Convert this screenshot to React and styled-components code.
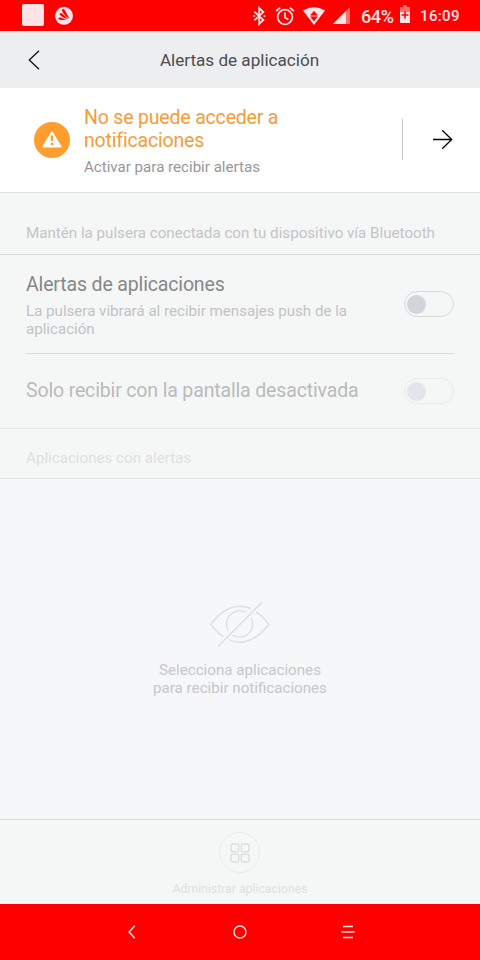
import React from "react";
import styled, { createGlobalStyle } from "styled-components";

const GlobalStyle = createGlobalStyle`
  * {
    box-sizing: border-box;
  }

  body {
    margin: 0;
    background: #f5f7f9;
    font-family: Roboto, "Liberation Sans", sans-serif;
  }

  p,
  h1,
  h2 {
    margin: 0;
    font-weight: 400;
  }

  svg {
    display: block;
    flex-shrink: 0;
  }
`;

const Screen = styled.div`
  display: flex;
  flex-direction: column;
  width: 480px;
  height: 960px;
  overflow: hidden;
`;

const StatusBar = styled.div`
  display: flex;
  align-items: center;
  height: 31px;
  padding: 0 20px 0 22px;
  background: #ff0000;
  color: #ffe3e5;
`;

const StatusSquare = styled.div`
  width: 22px;
  height: 22px;
  margin: 0 11px 1px 0;
  border-radius: 2px;
  background: #ffe3e5;
`;

const StatusIcons = styled.div`
  display: flex;
  align-items: center;
  margin-left: auto;
`;

const IconGap = styled.div`
  margin-left: ${(props) => props.$left || 0}px;
  padding-top: ${(props) => props.$top || 0}px;
  padding-bottom: ${(props) => props.$bottom || 0}px;
`;

const Battery = styled.span`
  width: 34px;
  margin: 3px 5px 0 11px;
  font-size: 18px;
  line-height: 20px;
  font-weight: 500;
  letter-spacing: -0.4px;
  white-space: nowrap;
`;

const Clock = styled.span`
  width: 40px;
  margin: 1px 0 0 10px;
  font-size: 15px;
  line-height: 20px;
  font-weight: 500;
  letter-spacing: 0.35px;
  white-space: nowrap;
`;

const Header = styled.header`
  display: grid;
  grid-template-columns: 60px 1fr 60px;
  align-items: center;
  height: 57px;
  background: #edeef0;
`;

const BackButton = styled.div`
  padding: 0 0 0 27px;
`;

const Title = styled.h1`
  margin-left: -1px;
  font-size: 17.1px;
  line-height: 24px;
  text-align: center;
  color: #4b4d4f;
`;

const Banner = styled.section`
  display: flex;
  align-items: center;
  height: 105px;
  padding: 0 26px 1px 34px;
  background: #ffffff;
  border-bottom: 1px solid #dcdfe2;
`;

const BannerText = styled.div`
  flex: 1;
  margin-left: 14px;
  padding-top: 2px;
`;

const BannerTitle = styled.h2`
  width: 230px;
  font-size: 19.5px;
  line-height: 23px;
  letter-spacing: -0.18px;
  color: #f79c37;
`;

const BannerInfo = styled.p`
  margin-top: 6px;
  font-size: 15.1px;
  line-height: 18px;
  color: #979797;
`;

const BannerDivider = styled.div`
  width: 1px;
  height: 41px;
  margin-right: 29px;
  background: #c9c9c9;
`;

const SectionLabel = styled.p`
  height: ${(props) => props.$height}px;
  padding: ${(props) => props.$top}px 26px 0;
  border-bottom: 1px solid ${(props) => props.$line};
  background: #f5f7f7;
  font-size: 15.15px;
  line-height: 18px;
  color: ${(props) => props.$color};
`;

const Settings = styled.section`
  padding: 0 26px;
  background: #f5f7f7;
  border-bottom: 1px solid #e3e5e5;
`;

const SettingRow = styled.div`
  display: flex;
  align-items: center;
  justify-content: space-between;
  height: ${(props) => props.$height}px;
  border-bottom: ${(props) => (props.$line ? "1px solid #d9dcdc" : "none")};
`;

const SettingText = styled.div`
  width: 350px;
  padding-top: ${(props) => props.$top || 0}px;
  padding-bottom: ${(props) => props.$bottom || 0}px;
`;

const SettingName = styled.h2`
  font-size: 19.5px;
  line-height: 23px;
  letter-spacing: -0.15px;
  white-space: nowrap;
  color: ${(props) => (props.$disabled ? "#b9bbbb" : "#868888")};
`;

const SettingInfo = styled.p`
  width: 340px;
  margin-top: 6px;
  font-size: 15.1px;
  line-height: 18px;
  color: #c1c3c3;
`;

const Toggle = styled.div`
  display: flex;
  align-items: center;
  width: 50px;
  height: 26px;
  padding-left: 2px;
  border: 1px solid ${(props) => (props.$disabled ? "#e9ebeb" : "#d8dada")};
  border-radius: 13px;
`;

const ToggleKnob = styled.div`
  width: 19px;
  height: 19px;
  border-radius: 50%;
  background: ${(props) => (props.$disabled ? "#e3e5e9" : "#d0d5da")};
`;

const EmptyState = styled.section`
  display: flex;
  flex: 1;
  flex-direction: column;
  align-items: center;
  padding-top: 121px;
  background: #f5f7f9;
`;

const EmptyText = styled.p`
  margin-top: 13px;
  font-size: 15.15px;
  line-height: 18px;
  text-align: center;
  color: #c5c7c9;
`;

const BottomBar = styled.footer`
  display: flex;
  flex-direction: column;
  align-items: center;
  height: 85px;
  padding-top: 12px;
  border-top: 1px solid #d9dcdd;
  background: #f5f7f7;
`;

const ManageIcon = styled.div`
  display: flex;
  align-items: center;
  justify-content: center;
  width: 41px;
  height: 41px;
  margin-right: 1px;
  border: 1px solid #eaecec;
  border-radius: 50%;
`;

const ManageText = styled.p`
  margin-top: 8px;
  font-size: 12.25px;
  line-height: 16px;
  color: #dddfdf;
`;

const NavBar = styled.nav`
  display: grid;
  grid-template-columns: repeat(3, 108px);
  justify-content: center;
  justify-items: center;
  align-items: center;
  height: 56px;
  background: #ff0000;
`;

function AvastIcon() {
  return (
    <svg width="18" height="20" viewBox="0 0 18 20" fill="none">
      <circle cx="9" cy="9.8" r="9" fill="#ffe3e5" />
      <path
        d="M7 4.4C7 2.6 9 2.4 9.7 4L14.4 12.6C11 10.4 7.6 7.2 7 4.4Z"
        fill="#ff0000"
      />
      <path
        d="M4.6 8C4.8 6.8 6.4 6.8 7.3 7.8L13 13.1C9.5 12.2 5.4 10.4 4.6 8Z"
        fill="#ff0000"
      />
      <path
        d="M3.2 12.6C3.6 11.4 5 11.4 6.6 12L11.4 13.9C7.6 14.2 4 14.4 3.2 12.6Z"
        fill="#ff0000"
      />
    </svg>
  );
}

function BluetoothIcon() {
  return (
    <svg width="13" height="20" viewBox="0 0 13 20" fill="none">
      <path
        d="M1.3 5.6l9 8.3-4.1 4V2.1l4.1 4-9 8.3"
        stroke="#ffe3e5"
        strokeWidth="1.9"
      />
      <circle cx="1.2" cy="10" r="1" fill="#ffe3e5" />
      <circle cx="11.5" cy="10" r="1" fill="#ffe3e5" />
    </svg>
  );
}

function AlarmIcon() {
  return (
    <svg width="20" height="20" viewBox="0 0 20 20" fill="none">
      <circle cx="10" cy="11" r="7.4" stroke="#ffe3e5" strokeWidth="1.8" />
      <path
        d="M10 6.5v5l3.4 2M1.2 5l4-3.3M18.8 5l-4-3.3"
        stroke="#ffe3e5"
        strokeWidth="1.7"
      />
    </svg>
  );
}

function WifiIcon() {
  return (
    <svg width="22" height="18" viewBox="0 0 22 18">
      <path d="M0 3.5Q11-3 22 3.5L11 18Z" fill="#ffe3e5" />
      <path
        d="M11 4.2l3.4 4H7.6zM7.6 9.8h6.8L11 14z"
        fill="#ff0000"
        stroke="#ff0000"
        strokeWidth="0.6"
      />
    </svg>
  );
}

function SignalIcon() {
  return (
    <svg width="17" height="17" viewBox="0 0 17 17">
      <path d="M0 17L17 0v17Z" fill="#ff6c6c" />
      <path d="M0 17L13 4v13Z" fill="#ffe3e5" />
    </svg>
  );
}

function BatteryIcon() {
  return (
    <svg width="10" height="18" viewBox="0 0 10 18">
      <path d="M3 0h4v2h3v6H0V2h3z" fill="#ff6c6c" />
      <path d="M0 7h10v11H0z" fill="#ffe3e5" />
      <path
        d="M4.2 6.5h1.6v2.7h2.7v1.6H5.8v2.7H4.2v-2.7H1.5V9.2h2.7z"
        fill="#ff0000"
      />
    </svg>
  );
}

function WarningIcon() {
  return (
    <svg width="36" height="36" viewBox="0 0 36 36">
      <circle cx="18" cy="18" r="18" fill="#ff9d2e" />
      <path
        d="M18 10.5L26.5 24.5H9.5Z"
        fill="#ffffff"
        stroke="#ffffff"
        strokeWidth="2"
        strokeLinejoin="round"
      />
      <path d="M18 13.5v5.5M18 20.7v2.3" stroke="#ff9d2e" strokeWidth="2.4" />
    </svg>
  );
}

function HiddenEyeIcon() {
  return (
    <svg
      width="60"
      height="48"
      viewBox="0 0 60 48"
      fill="none"
      stroke="#dcdee0"
      strokeWidth="1.4"
    >
      <path d="M52 2.2L7.8 46.7" />
      <path d="M41 8.5C37.5 7 33.5 6.2 29.5 6.2 20 6.2 10.5 11.5.8 24.3 5 29.8 9 33.8 13.2 36.6" />
      <path d="M18.5 39.5C22 41.3 25.8 42.3 29.5 42.3 39 42.3 49 37 58.9 24.3 54.8 19 50.6 14.8 46.2 11.8" />
      <path d="M36 12.5A13.2 13.2 0 0 0 18.5 31.2" />
      <path d="M22.5 35.2A13.2 13.2 0 0 0 41.2 18" />
    </svg>
  );
}

function AppsIcon() {
  return (
    <svg
      width="20"
      height="20"
      viewBox="0 0 20 20"
      fill="none"
      stroke="#dddfdf"
      strokeWidth="1.5"
    >
      <rect x="1" y="1" width="7.7" height="7.7" rx="1.4" />
      <rect x="11.3" y="1" width="7.7" height="7.7" rx="1.4" />
      <rect x="1" y="11.3" width="7.7" height="7.7" rx="1.4" />
      <rect x="11.3" y="11.3" width="7.7" height="7.7" rx="1.4" />
    </svg>
  );
}

function Switch({ disabled }) {
  return (
    <Toggle $disabled={disabled}>
      <ToggleKnob $disabled={disabled} />
    </Toggle>
  );
}

export default function App() {
  return (
    <Screen>
      <GlobalStyle />
      <StatusBar>
        <StatusSquare />
        <AvastIcon />
        <StatusIcons>
          <IconGap $top={1}>
            <BluetoothIcon />
          </IconGap>
          <IconGap $left={9}>
            <AlarmIcon />
          </IconGap>
          <IconGap $left={8}>
            <WifiIcon />
          </IconGap>
          <IconGap $left={8}>
            <SignalIcon />
          </IconGap>
          <Battery>64%</Battery>
          <IconGap $bottom={3}>
            <BatteryIcon />
          </IconGap>
          <Clock>16:09</Clock>
        </StatusIcons>
      </StatusBar>

      <Header>
        <BackButton>
          <svg width="14" height="20" viewBox="0 0 14 20" fill="none">
            <path d="M12 .7L2.3 10 12 19.3" stroke="#111111" strokeWidth="1.3" />
          </svg>
        </BackButton>
        <Title>Alertas de aplicación</Title>
      </Header>

      <Banner>
        <WarningIcon />
        <BannerText>
          <BannerTitle>No se puede acceder a notificaciones</BannerTitle>
          <BannerInfo>Activar para recibir alertas</BannerInfo>
        </BannerText>
        <BannerDivider />
        <svg width="22" height="20" viewBox="0 0 22 20" fill="none">
          <path
            d="M1 9.5h19M10.2.2L19.7 9.5l-9.5 9.3"
            stroke="#000000"
            strokeWidth="1.3"
          />
        </svg>
      </Banner>

      <SectionLabel $height={62} $top={31} $line="#d9dcdc" $color="#c3c5c5">
        Mantén la pulsera conectada con tu dispositivo vía Bluetooth
      </SectionLabel>

      <Settings>
        <SettingRow $height={99} $line>
          <SettingText $top={2}>
            <SettingName>Alertas de aplicaciones</SettingName>
            <SettingInfo>
              La pulsera vibrará al recibir mensajes push de la aplicación
            </SettingInfo>
          </SettingText>
          <Switch />
        </SettingRow>
        <SettingRow $height={74}>
          <SettingText $bottom={2}>
            <SettingName $disabled>
              Solo recibir con la pantalla desactivada
            </SettingName>
          </SettingText>
          <Switch disabled />
        </SettingRow>
      </Settings>

      <SectionLabel $height={50} $top={20} $line="#e3e5e6" $color="#dddfdf">
        Aplicaciones con alertas
      </SectionLabel>

      <EmptyState>
        <HiddenEyeIcon />
        <EmptyText>
          Selecciona aplicaciones
          <br />
          para recibir notificaciones
        </EmptyText>
      </EmptyState>

      <BottomBar>
        <ManageIcon>
          <AppsIcon />
        </ManageIcon>
        <ManageText>Administrar aplicaciones</ManageText>
      </BottomBar>

      <NavBar>
        <svg width="8" height="14" viewBox="0 0 8 14" fill="none">
          <path d="M6.8 .8L1.1 7 6.8 13.2" stroke="#ffe3e5" strokeWidth="1.5" />
        </svg>
        <svg width="14" height="14" viewBox="0 0 14 14" fill="none">
          <circle cx="7" cy="7" r="6" stroke="#ffe3e5" strokeWidth="1.4" />
        </svg>
        <svg width="14" height="14" viewBox="0 0 14 14" fill="none">
          <path
            d="M2 1.5h10M.3 7h13.4M2 12.5h10"
            stroke="#ffe3e5"
            strokeWidth="1.5"
          />
        </svg>
      </NavBar>
    </Screen>
  );
}
